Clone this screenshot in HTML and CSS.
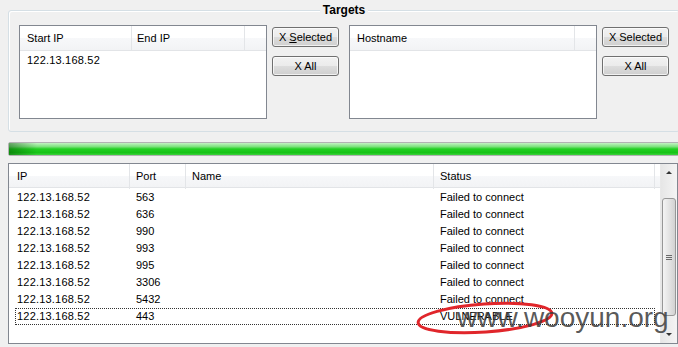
FILE: index.html
```html
<!DOCTYPE html>
<html lang="en">
<head>
    <meta charset="UTF-8">
    <title>Targets</title>
    <link rel="stylesheet" href="styles.css">
</head>
<body>
    <div class="group">
        <div class="group-title">Targets</div>
        <div class="group-body">
            <div class="listbox">
                <div class="list-head">
                    <div class="head-col col-start">Start IP</div>
                    <div class="head-col col-end">End IP</div>
                    <div class="head-fill"></div>
                </div>
                <div class="list-row">122.13.168.52</div>
            </div>
            <div class="buttons">
                <button type="button" class="btn">X <u>S</u>elected</button>
                <button type="button" class="btn">X All</button>
            </div>
            <div class="listbox listbox-right">
                <div class="list-head">
                    <div class="head-col col-host">Hostname</div>
                    <div class="head-fill"></div>
                </div>
            </div>
            <div class="buttons">
                <button type="button" class="btn">X Selected</button>
                <button type="button" class="btn">X All</button>
            </div>
        </div>
    </div>

    <div class="progress"><div class="progress-fill"></div></div>

    <div class="results">
        <div class="results-main">
            <div class="results-head">
                <div class="rh-col rh-ip">IP</div>
                <div class="rh-col">Port</div>
                <div class="rh-col">Name</div>
                <div class="rh-col">Status</div>
                <div class="rh-fill"></div>
            </div>
            <div class="rows">
                <div class="row"><span class="c-ip">122.13.168.52</span><span>563</span><span></span><span>Failed to connect</span></div>
                <div class="row"><span class="c-ip">122.13.168.52</span><span>636</span><span></span><span>Failed to connect</span></div>
                <div class="row"><span class="c-ip">122.13.168.52</span><span>990</span><span></span><span>Failed to connect</span></div>
                <div class="row"><span class="c-ip">122.13.168.52</span><span>993</span><span></span><span>Failed to connect</span></div>
                <div class="row"><span class="c-ip">122.13.168.52</span><span>995</span><span></span><span>Failed to connect</span></div>
                <div class="row"><span class="c-ip">122.13.168.52</span><span>3306</span><span></span><span>Failed to connect</span></div>
                <div class="row"><span class="c-ip">122.13.168.52</span><span>5432</span><span></span><span>Failed to connect</span></div>
                <div class="row row-focus"><span class="c-ip">122.13.168.52</span><span>443</span><span></span><span>VULNERABLE</span></div>
            </div>
        </div>
        <div class="scrollbar">
            <div class="sb-btn"><span class="arrow-up"></span></div>
            <div class="sb-thumb">
                <div class="grip"></div>
            </div>
            <div class="sb-space"></div>
            <div class="sb-btn"><span class="arrow-down"></span></div>
        </div>

        <svg class="mark-ring" width="160" height="46" viewBox="0 0 160 46">
            <ellipse cx="80" cy="22" rx="67" ry="14" fill="none" stroke="#e0262b" stroke-width="3" transform="rotate(-4 80 22)"/>
        </svg>
        <div class="watermark">www.wooyun.org</div>
    </div>
</body>
</html>
```

FILE: styles.css
```css
body {
    margin: 0;
    padding-left: 8px;
    width: 678px;
    height: 347px;
    box-sizing: border-box;
    overflow: hidden;
    background-color: #f0f0f0;
    font-family: "Liberation Sans", Arial, sans-serif;
    font-size: 11px;
    color: #000;
}

/* Targets group box */
.group {
    margin-top: 10px;
    width: 672px;
    height: 122px;
    box-sizing: border-box;
    border: 1px solid #d5dfe5;
    border-radius: 3px;
    box-shadow: inset 1px 1px 0 #fff;
}

.group-title {
    width: max-content;
    margin: -8px auto 0;
    padding: 0 3px;
    background-color: #f0f0f0;
    font-weight: bold;
    font-size: 12px;
    line-height: 14px;
}

.group-body {
    display: flex;
    align-items: flex-start;
    margin-top: 8px;
    padding-left: 10px;
}

.listbox {
    width: 248px;
    height: 94px;
    box-sizing: border-box;
    border: 1px solid #828790;
    background-color: #fff;
}

.listbox-right {
    margin-left: 10px;
}

.list-head {
    display: flex;
    height: 25px;
    box-sizing: border-box;
    border-bottom: 1px solid #e2e4e7;
    background: linear-gradient(#fff, #fff 50%, #f7f8fa 50%, #f2f3f5);
}

.head-col {
    box-sizing: border-box;
    padding-left: 7px;
    line-height: 25px;
    border-right: 1px solid #e3e5e8;
}

.col-start { width: 112px; }
.col-end { width: 113px; padding-left: 5px; }
.col-host { width: 225px; }

.head-fill {
    flex: 1;
}

.list-row {
    height: 18px;
    line-height: 19px;
    padding-left: 7px;
    letter-spacing: 0.2px;
}

.buttons {
    display: flex;
    flex-direction: column;
    gap: 9px;
    margin: 2px 0 0 5px;
}

.btn {
    width: 67px;
    height: 20px;
    padding: 0;
    border: 1px solid #707070;
    border-radius: 3px;
    background: linear-gradient(#f2f2f2, #ebebeb 50%, #dddddd 50%, #cfcfcf);
    box-shadow: inset 0 0 0 1px rgba(255, 255, 255, 0.7);
    font-family: "Liberation Sans", Arial, sans-serif;
    font-size: 11px;
    color: #000;
}

/* progress bar */
.progress {
    margin-top: 10px;
    width: 672px;
    height: 14px;
    box-sizing: border-box;
    border: 1px solid #b2b2b2;
    border-radius: 2px;
    background-color: #e6e6e6;
}

.progress-fill {
    height: 100%;
    background:
        linear-gradient(to right, rgba(0, 70, 0, 0.45), rgba(0, 70, 0, 0) 28px),
        linear-gradient(#c4f2c4, #7ee27e 30%, #22d022 50%, #16c316 80%, #3dd23d);
}

/* results list */
.results {
    position: relative;
    display: flex;
    margin-top: 7px;
    width: 670px;
    height: 181px;
    box-sizing: border-box;
    border: 1px solid #828790;
    background-color: #fff;
}

.results-main {
    flex: 1;
}

.results-head {
    display: grid;
    grid-template-columns: 121px 56px 248px 221px 1fr;
    height: 24px;
    box-sizing: border-box;
    border-bottom: 1px solid #e2e4e7;
    background: linear-gradient(#fff, #fff 50%, #f7f8fa 50%, #f2f3f5);
}

.rh-col {
    padding-left: 6px;
    line-height: 25px;
    border-right: 1px solid #e3e5e8;
}

.rh-ip {
    padding-left: 8px;
}

.rows {
    padding-top: 1px;
}

.row {
    display: grid;
    grid-template-columns: 114px 56px 248px 220px;
    margin-left: 6px;
    width: 640px;
    height: 17px;
    box-sizing: border-box;
    border: 1px solid transparent;
    line-height: 15px;
}

.row span {
    padding-left: 6px;
    white-space: nowrap;
}

.row .c-ip {
    padding-left: 1px;
    letter-spacing: 0.2px;
}

.row-focus {
    border: 1px dotted #333;
}

/* vertical scrollbar */
.scrollbar {
    display: flex;
    flex-direction: column;
    width: 16px;
    border-left: 1px solid #e8e8e8;
    background: linear-gradient(to right, #e6e6e6, #f4f4f4);
}

.sb-btn {
    display: flex;
    align-items: center;
    justify-content: center;
    height: 17px;
}

.arrow-up {
    width: 0;
    height: 0;
    border-left: 3px solid transparent;
    border-right: 3px solid transparent;
    border-bottom: 3px solid #333;
}

.arrow-down {
    width: 0;
    height: 0;
    border-left: 3px solid transparent;
    border-right: 3px solid transparent;
    border-top: 3px solid #333;
}

.sb-thumb {
    display: flex;
    align-items: center;
    justify-content: center;
    margin: 17px 0 0 1px;
    width: 14px;
    height: 118px;
    box-sizing: border-box;
    border: 1px solid #979797;
    border-radius: 3px;
    background: linear-gradient(to right, #f4f4f4, #e4e4e4 50%, #d2d2d2);
}

.grip {
    width: 6px;
    height: 5px;
    background: repeating-linear-gradient(#6a6a6a 0, #6a6a6a 1px, transparent 1px, transparent 2px);
}

.sb-space {
    flex: 1;
}

/* overlay marks on the screenshot */
.mark-ring {
    position: absolute;
    left: 396px;
    top: 132px;
}

.watermark {
    position: absolute;
    left: 448px;
    top: 140px;
    font-size: 28px;
    line-height: 28px;
    color: rgba(60, 60, 60, 0.85);
    white-space: nowrap;
}
```
